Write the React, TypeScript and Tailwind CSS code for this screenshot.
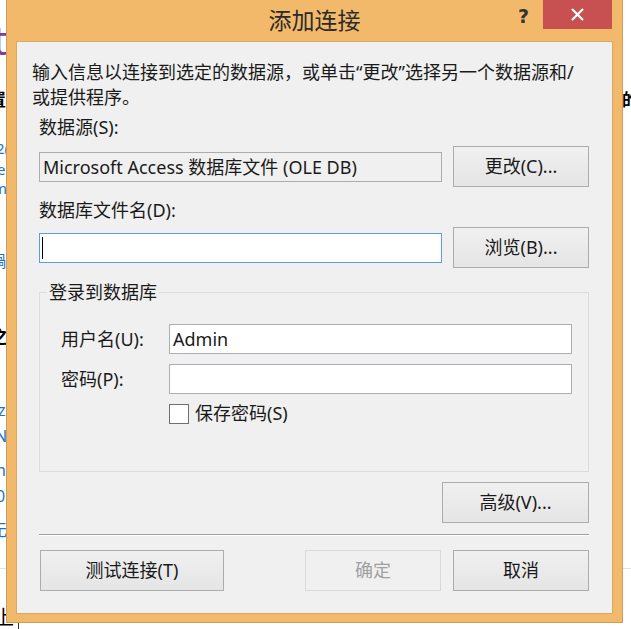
import React from "react"

const font = '"Noto Sans", "Noto Sans CJK SC", sans-serif'

function Button({ children, className = "", disabled = false }: { children: React.ReactNode; className?: string; disabled?: boolean }) {
  return (
    <button
      className={
        "h-[41px] flex items-center justify-center border text-[18px] " +
        (disabled
          ? "border-[#d9d9d9] bg-[#f0f0f0] text-[#a0a0a0] "
          : "border-[#acacac] bg-linear-to-b from-[#f0f0f0] to-[#e5e5e5] text-[#1a1a1a] ") +
        className
      }
    >
      {children}
    </button>
  )
}

function Backdrop() {
  // bits of the window behind the dialog
  const bits: { t: string; x: number; y: number; c: string; s: number; b?: boolean }[] = [
    { t: "t", x: -7, y: 20, c: "#7d3f92", s: 40 },
    { t: "置", x: -11, y: 91, c: "#000", s: 17, b: true },
    { t: "2(", x: -4, y: 141, c: "#1e73c8", s: 15 },
    { t: "e", x: -3, y: 162, c: "#1e73c8", s: 15 },
    { t: "m", x: -7, y: 181, c: "#1e73c8", s: 15 },
    { t: "鍋", x: -10, y: 253, c: "#1e73c8", s: 16 },
    { t: "之", x: -9, y: 328, c: "#000", s: 17, b: true },
    { t: "z", x: -2, y: 402, c: "#1e73c8", s: 16 },
    { t: "N", x: -5, y: 428, c: "#1e73c8", s: 16 },
    { t: "h", x: -4, y: 462, c: "#1e73c8", s: 16 },
    { t: "0", x: -4, y: 488, c: "#1e73c8", s: 16 },
    { t: "无", x: -9, y: 522, c: "#1e73c8", s: 16 },
    { t: "的", x: 622, y: 91, c: "#000", s: 17, b: true },
    { t: "上", x: -6, y: 608, c: "#000", s: 20 },
  ]
  return (
    <>
      {bits.map((b, i) => (
        <span
          key={i}
          className={"absolute leading-none " + (b.b ? "font-bold" : "")}
          style={{ left: b.x, top: b.y, color: b.c, fontSize: b.s }}
        >
          {b.t}
        </span>
      ))}
      <div className="absolute left-0 top-[568px] h-px w-[631px] bg-[#e3e3e3]" />
      <div className="absolute left-[18px] top-[621px] h-[8px] w-[12px] border-l border-t border-[#333]" />
    </>
  )
}

export default function App() {
  return (
    <div className="relative w-[631px] h-[629px] overflow-hidden bg-white" style={{ fontFamily: font }}>
      <Backdrop />

      <div className="absolute left-[6px] top-[-1px] w-[617px] h-[624px] border border-[#d29c55] bg-[#f2b96b] flex flex-col">
        {/* title bar */}
        <div className="relative h-[41px] shrink-0 flex items-center justify-center">
          <span className="text-[23px] text-[#2b2b2b] leading-none pb-[1px]">添加连接</span>
          <span
            className="absolute right-[93px] top-[2px] text-[19px] font-bold text-[#333]"
            style={{ fontFamily: '"DejaVu Sans", sans-serif' }}
          >
            ?
          </span>
          <div className="absolute right-[10px] top-0 w-[69px] h-[29px] bg-[#c75050] flex items-center justify-center">
            <svg width="13" height="13" viewBox="0 0 13 13">
              <path d="M1 1 L12 12 M12 1 L1 12" stroke="#fff" strokeWidth="2.2" />
            </svg>
          </div>
        </div>

        {/* client area */}
        <div className="ml-[9px] w-[597px] h-[573px] border border-[#d8a866] bg-[#f0f0f0] pl-[22px] pr-[23px] pt-[18px] flex flex-col text-[18px] text-[#1a1a1a]">
          <p className="-ml-[7px] leading-[25px] whitespace-nowrap">
            输入信息以连接到选定的数据源，或单击“更改”选择另一个数据源和/
            <br />
            或提供程序。
          </p>

          <div className="mt-[5px] leading-[25px]">数据源(S):</div>
          <div className="mt-[6px] h-[41px] flex items-center">
            <div className="w-[403px] h-[30px] border border-[#acacac] bg-[#f0f0f0] flex items-center pl-[3px] leading-none">
              Microsoft Access 数据库文件 (OLE DB)
            </div>
            <Button className="ml-[11px] w-[136px]">更改(C)...</Button>
          </div>

          <div className="mt-[11px] leading-[25px]">数据库文件名(D):</div>
          <div className="mt-[4px] h-[41px] flex items-center">
            <div className="w-[403px] h-[30px] border border-[#569de5] bg-white flex items-center pl-[2px]">
              <div className="w-px h-[22px] bg-black" />
            </div>
            <Button className="ml-[11px] w-[136px]">浏览(B)...</Button>
          </div>

          <fieldset className="mt-[12px] h-[192px] w-[550px] border border-[#dcdcdc] px-0">
            <legend className="ml-[7px] px-[2px] leading-[25px]">登录到数据库</legend>
            <div className="mt-[19px] pl-[21px] flex items-center h-[30px]">
              <span className="w-[108px]">用户名(U):</span>
              <div className="w-[403px] h-[30px] border border-[#abadb3] bg-white flex items-center pl-[3px]">
                Admin
              </div>
            </div>
            <div className="mt-[10px] pl-[21px] flex items-center h-[30px]">
              <span className="w-[108px]">密码(P):</span>
              <div className="w-[403px] h-[30px] border border-[#abadb3] bg-white" />
            </div>
            <div className="mt-[9px] pl-[129px] flex items-center h-[21px] gap-[6px]">
              <div className="w-[20px] h-[20px] border border-[#707070] bg-white" />
              <span>保存密码(S)</span>
            </div>
          </fieldset>

          <div className="mt-[10px] flex justify-end">
            <Button className="w-[147px]">高级(V)...</Button>
          </div>

          <div className="mt-[11px] h-[2px] border-t border-[#a0a0a0] bg-white" />

          <div className="mt-[14px] flex items-center">
            <Button className="ml-px w-[184px]">测试连接(T)</Button>
            <div className="flex-1" />
            <Button disabled className="w-[136px]">确定</Button>
            <Button className="ml-[12px] w-[136px]">取消</Button>
          </div>
        </div>
      </div>
    </div>
  )
}
